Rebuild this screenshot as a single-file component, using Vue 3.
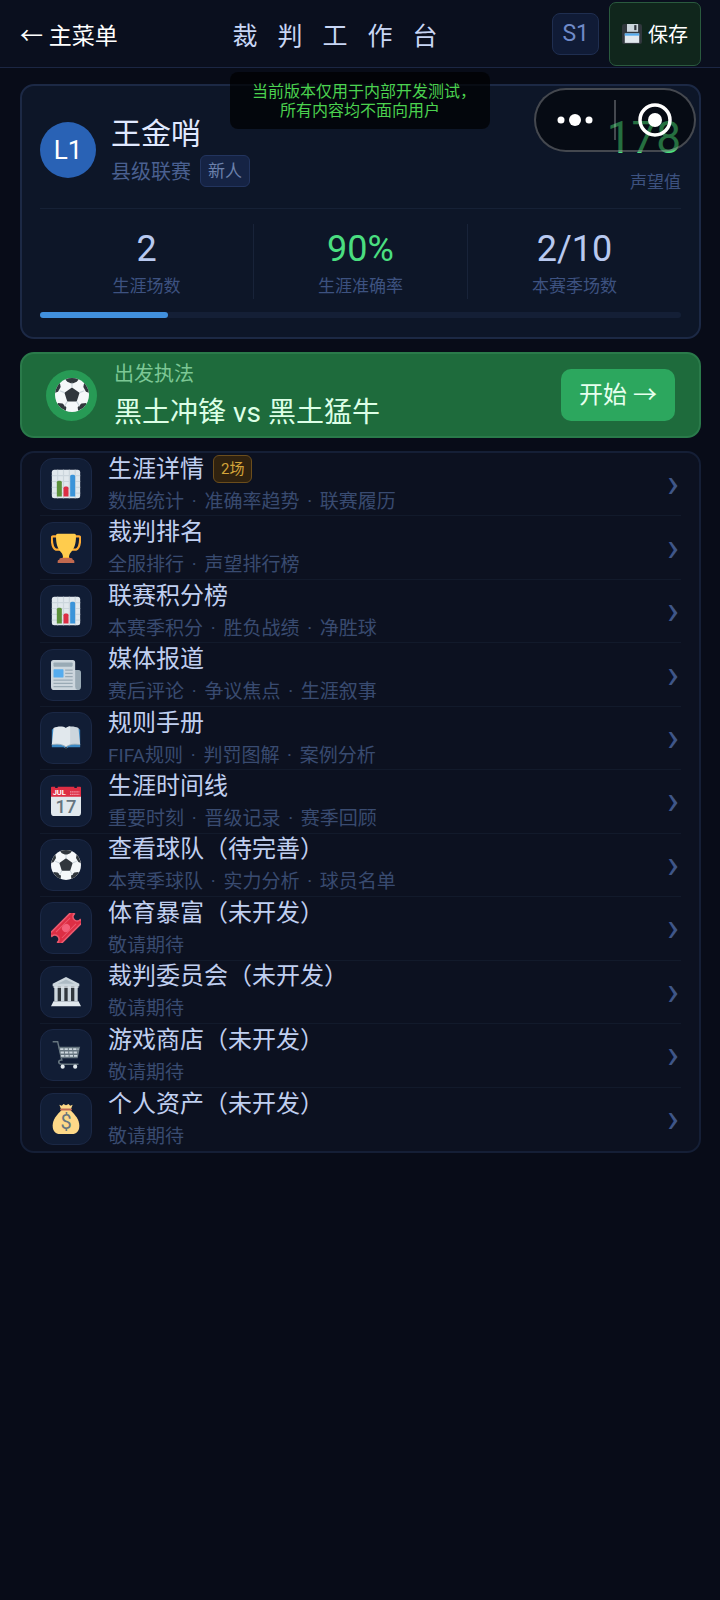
<script setup>
import { ref, computed } from 'vue'

const referee = ref({
  level: 'L1',
  name: '王金哨',
  league: '县级联赛',
  title: '新人',
  reputation: 178,
  seasonPlayed: 2,
  seasonTotal: 10
})

const stats = computed(() => [
  { label: '生涯场数', value: '2' },
  { label: '生涯准确率', value: '90%', good: true },
  { label: '本赛季场数', value: `${referee.value.seasonPlayed}/${referee.value.seasonTotal}` }
])

const progress = computed(() => (referee.value.seasonPlayed / referee.value.seasonTotal) * 100)

const menu = [
  { icon: 'chart', title: '生涯详情', badge: '2场', desc: ['数据统计', '准确率趋势', '联赛履历'] },
  { icon: 'trophy', title: '裁判排名', desc: ['全服排行', '声望排行榜'] },
  { icon: 'chart', title: '联赛积分榜', desc: ['本赛季积分', '胜负战绩', '净胜球'] },
  { icon: 'news', title: '媒体报道', desc: ['赛后评论', '争议焦点', '生涯叙事'] },
  { icon: 'book', title: '规则手册', desc: ['FIFA规则', '判罚图解', '案例分析'] },
  { icon: 'calendar', title: '生涯时间线', desc: ['重要时刻', '晋级记录', '赛季回顾'] },
  { icon: 'ball', title: '查看球队（待完善）', desc: ['本赛季球队', '实力分析', '球员名单'] },
  { icon: 'ticket', title: '体育暴富（未开发）', desc: ['敬请期待'] },
  { icon: 'bank', title: '裁判委员会（未开发）', desc: ['敬请期待'] },
  { icon: 'cart', title: '游戏商店（未开发）', desc: ['敬请期待'] },
  { icon: 'money', title: '个人资产（未开发）', desc: ['敬请期待'] }
]
</script>

<template>
  <div class="page">
    <svg class="sprite" aria-hidden="true">
      <symbol id="icon-chart" viewBox="0 0 36 36">
        <rect x="1" y="1" width="34" height="34" rx="3" fill="#e1e8ed" />
        <path d="M1 8h34M1 15h34M1 22h34M1 29h34M8 1v34M15 1v34M22 1v34M29 1v34" stroke="#ccd6dd" stroke-width="1.4" />
        <path d="M7 33V16a2 2 0 0 1 2-2h2a2 2 0 0 1 2 2v17z" fill="#5c913b" />
        <path d="M15 33V23a2 2 0 0 1 2-2h2a2 2 0 0 1 2 2v10z" fill="#dd2e44" />
        <path d="M23 33V9a2 2 0 0 1 2-2h2a2 2 0 0 1 2 2v24z" fill="#3b94d9" />
      </symbol>
      <symbol id="icon-trophy" viewBox="0 0 36 36">
        <path d="M8 4H3C1 4 .8 5 1 8c.3 6 2 11 5 12h7M28 4h5c2 0 2.200 1 2 4-.3 6-2 11-5 12h-7" fill="none" stroke="#ffac33" stroke-width="2.600" />
        <path d="M8 1h20c1.500 0 2 1 2 3 0 9-2 15-6 19-2 2-2.500 4-2.500 8h-7c0-4-.5-6-2.500-8C8 19 6 13 6 4c0-2 .5-3 2-3z" fill="#ffcc4d" />
        <path d="M14 29h8v3h-8z" fill="#ffac33" />
        <path d="M12 30h12c1.500 0 2 1 2 2 1.500 0 2 1 2 2v2H8v-2c0-1 .5-2 2-2 0-1 .5-2 2-2z" fill="#c1694f" />
      </symbol>
      <symbol id="icon-news" viewBox="0 0 36 36">
        <path d="M28 12h5a3 3 0 0 1 3 3v17a4 4 0 0 1-4 4h-5z" fill="#99aab5" />
        <path d="M3 0h23a3 3 0 0 1 3 3v29a4 4 0 0 0 3 4H4a4 4 0 0 1-4-4V3a3 3 0 0 1 3-3z" fill="#ccd6dd" />
        <rect x="3" y="3" width="23" height="5" rx="1" fill="#99aab5" />
        <rect x="3" y="11" width="12" height="10" rx="1" fill="#55acee" />
        <path d="M17 12h9M17 16h9M17 20h9M3 24h23M3 28h23M3 32h23" stroke="#99aab5" stroke-width="1.500" />
      </symbol>
      <symbol id="icon-book" viewBox="0 0 36 36">
        <path d="M1 8l3-2h28l3 2v21H21l-3 2-3-2H1z" fill="#3b88c3" />
        <path d="M18 29V6C14 3.500 8 4 3 6L1 26c6-1 13-1 17 3z" fill="#e1e8ed" />
        <path d="M18 29V6c4-2.500 10-2 15 0l2 20c-6-1-13-1-17 3z" fill="#ccd6dd" />
        <path d="M18 28V6c1.500-1.200 3-1.700 5-2v22c-2 .4-3.500 1-5 2z" fill="#e1e8ed" />
        <path d="M1 26c6-1 13-1 17 3 4-4 11-4 17-3" fill="none" stroke="#99aab5" />
        <circle cx="18" cy="30" r="1.300" fill="#31373d" />
      </symbol>
      <symbol id="icon-calendar" viewBox="0 0 36 36">
        <path d="M0 10h36v22a4 4 0 0 1-4 4H4a4 4 0 0 1-4-4z" fill="#e1e8ed" />
        <path d="M0 13V2a1 1 0 0 1 1-1h4v1.500h3V1h20v1.500h3V1h4a1 1 0 0 1 1 1v11z" fill="#dd2e44" />
        <path d="M23 7h11M23 10h11" stroke="#f4abba" stroke-width="1.500" stroke-dasharray="1.500 1" />
      </symbol>
      <symbol id="icon-ball" viewBox="0 0 36 36">
        <circle cx="18" cy="18" r="18" fill="#f5f8fa" />
        <path d="M18 10l8 5.500-3 9.500H13l-3-9.500z" fill="#31373d" />
        <path d="M11 1.500A18 18 0 0 1 25 1.500L23 4l-5 2-5-2zM35.800 15.500l-3-1L30 9.500l.8-4.200a18 18 0 0 1 5 10.200zM33 28a18 18 0 0 1-8.500 6.800L24 31l4-4 5-.5zM3 28a18 18 0 0 0 8.500 6.800L12 31l-4-4-5-.5zM.2 15.500l3-1L6 9.500l-.8-4.200a18 18 0 0 0-5 10.200z" fill="#31373d" />
        <path d="M18 10V5M26 15.500l5-2M23 25l3 5M13 25l-3 5M10 15.500l-5-2" stroke="#ccd6dd" stroke-width="1.200" />
      </symbol>
      <symbol id="icon-ticket" viewBox="0 0 36 36">
        <g transform="rotate(-45 18 18)">
          <path d="M-1 9h38v4a5 5 0 0 0 0 10v4H-1v-4a5 5 0 0 0 0-10z" fill="#dd2e44" stroke="#ea596e" stroke-width="2" />
          <path d="M6 13h24M6 23h24" stroke="#ea596e" stroke-width="1.200" />
          <ellipse cx="18" cy="18" rx="5" ry="4.500" fill="#f4607a" />
        </g>
      </symbol>
      <symbol id="icon-bank" viewBox="0 0 36 36">
        <path d="M18 0l16 8v3H2V8z" fill="#ccd6dd" />
        <path d="M18 3l10 5H8z" fill="#aebbc4" />
        <path d="M4 11h28v18H4z" fill="#31373d" />
        <path d="M4 11h4v18H4zM12 11h4v18h-4zM20 11h4v18h-4zM28 11h4v18h-4z" fill="#ccd6dd" />
        <path d="M3 11h30v2H3zM3 29h30l3 6H0z" fill="#e1e8ed" />
      </symbol>
      <symbol id="icon-cart" viewBox="0 0 36 36">
        <path d="M2 2h6l5 22c-5 0-5 5 0 5h20" fill="none" stroke="#66757f" stroke-width="1.800" />
        <path d="M9 8h26l-3 14H12z" fill="#66757f" />
        <path d="M11 11h22M11.500 15h21M12 19h20" stroke="#ccd6dd" stroke-width="2.200" stroke-dasharray="4 1.200" />
        <circle cx="14" cy="32" r="2.500" fill="#e1e8ed" />
        <circle cx="29" cy="32" r="2.500" fill="#e1e8ed" />
      </symbol>
      <symbol id="icon-money" viewBox="0 0 36 36">
        <path d="M13 7C7 13 2 19 2 26c0 6 3 10 9 10h14c6 0 9-4 9-10 0-7-5-13-11-19z" fill="#fdd888" />
        <path d="M12 6L10 1l3 1 2-2 3 1.500L21 0l2 2 3-1-2 5z" fill="#fdd888" />
        <path d="M12 6.500h12" stroke="#bf6952" stroke-width="2.400" stroke-linecap="round" />
      </symbol>
      <symbol id="icon-save" viewBox="0 0 36 36">
        <path d="M4 0h28a4 4 0 0 1 4 4v28a4 4 0 0 1-4 4H4a4 4 0 0 1-4-4V4a4 4 0 0 1 4-4z" fill="#31373d" />
        <path d="M9 0h20v14H9z" fill="#ccd6dd" />
        <path d="M22 2h4v9h-4z" fill="#31373d" />
        <path d="M5 17h26v17H5z" fill="#e1e8ed" />
        <path d="M5 17h26v4H5z" fill="#55acee" />
      </symbol>
    </svg>

    <header class="navbar">
      <button class="back-btn">← 主菜单</button>
      <h1 class="nav-title">裁判工作台</h1>
      <div class="nav-actions">
        <span class="season">S1</span>
        <button class="save-btn">
          <svg class="save-icon" aria-hidden="true"><use href="#icon-save" /></svg>
          保存
        </button>
      </div>
    </header>

    <main class="content">
      <section class="profile">
        <div class="profile-top">
          <div class="avatar">{{ referee.level }}</div>
          <div class="identity">
            <h2 class="name">{{ referee.name }}</h2>
            <div class="rank">
              <span>{{ referee.league }}</span>
              <span class="rank-tag">{{ referee.title }}</span>
            </div>
          </div>
          <div class="reputation">
            <div class="reputation-value">{{ referee.reputation }}</div>
            <div class="reputation-label">声望值</div>
          </div>
        </div>
        <div class="stats">
          <div v-for="stat in stats" :key="stat.label" class="stat">
            <div class="stat-value" :class="{ good: stat.good }">{{ stat.value }}</div>
            <div class="stat-label">{{ stat.label }}</div>
          </div>
        </div>
        <div class="progress">
          <div class="progress-fill" :style="{ width: progress + '%' }"></div>
        </div>
      </section>

      <section class="match">
        <div class="match-icon">
          <svg class="ball" aria-hidden="true"><use href="#icon-ball" /></svg>
        </div>
        <div class="match-info">
          <div class="match-label">出发执法</div>
          <div class="match-teams">黑土冲锋 vs 黑土猛牛</div>
        </div>
        <button class="start-btn">开始 →</button>
      </section>

      <nav class="menu">
        <a v-for="item in menu" :key="item.title" href="#" class="menu-item" @click.prevent>
          <span class="menu-icon">
            <svg class="glyph" viewBox="0 0 36 36" aria-hidden="true">
              <use :href="'#icon-' + item.icon" />
              <template v-if="item.icon === 'calendar'">
                <text x="2" y="11" class="cal-month">JUL</text>
                <text x="18" y="32" text-anchor="middle" class="cal-day">17</text>
              </template>
              <text v-if="item.icon === 'money'" x="18" y="30" text-anchor="middle" class="dollar">$</text>
            </svg>
          </span>
          <span class="menu-text">
            <span class="menu-title">
              {{ item.title }}
              <span v-if="item.badge" class="menu-badge">{{ item.badge }}</span>
            </span>
            <span class="menu-desc">
              <template v-for="(part, i) in item.desc" :key="part"><span v-if="i" class="dot"> · </span>{{ part }}</template>
            </span>
          </span>
          <span class="arrow">›</span>
        </a>
      </nav>
    </main>

    <div class="notice">当前版本仅用于内部开发测试，<br>所有内容均不面向用户</div>

    <div class="capsule">
      <button class="capsule-btn" aria-label="更多">
        <svg class="more" viewBox="0 0 36 14">
          <circle cx="4" cy="7" r="3.500" />
          <circle cx="18" cy="7" r="6" />
          <circle cx="32" cy="7" r="3.500" />
        </svg>
      </button>
      <button class="capsule-btn" aria-label="关闭">
        <svg class="target" viewBox="0 0 34 34">
          <circle cx="17" cy="17" r="15" fill="none" stroke="#fff" stroke-width="3.500" />
          <circle cx="17" cy="17" r="7" />
        </svg>
      </button>
    </div>
  </div>
</template>

<style>
body {
  background: #080c18;
}
</style>

<style scoped>
.page {
  position: relative;
  min-height: 100vh;
  background: #080c18;
  color: #c8d6f5;
  font-family: Roboto, "Noto Sans CJK SC", sans-serif;
  font-weight: 400;
}

.sprite {
  position: absolute;
  width: 0;
  height: 0;
}

.cal-month {
  font-size: 9px;
  font-weight: 700;
  fill: #fff;
}

.cal-day {
  font-size: 22px;
  font-weight: 500;
  fill: #66757f;
}

.dollar {
  font-size: 24px;
  fill: #67757f;
}

button {
  padding: 0;
  border: none;
  background: none;
  color: inherit;
  font: inherit;
  cursor: pointer;
}

.navbar {
  display: flex;
  align-items: center;
  height: 67px;
  padding: 0 19px 0 20px;
  background: #0a0f1e;
  border-bottom: 1px solid #1b2643;
}

.back-btn {
  padding-right: 20px;
  color: #fff;
  font-size: 23px;
}

.nav-title {
  flex: 1;
  margin: 0;
  font-size: 25px;
  font-weight: 400;
  letter-spacing: 20px;
  text-align: center;
  white-space: nowrap;
}

.nav-actions {
  display: flex;
  align-items: center;
  gap: 10px;
}

.season {
  padding: 0 9px;
  border: 1px solid #1f2e50;
  border-radius: 8px;
  background: #101b36;
  color: #6f8ac8;
  font-size: 23px;
  line-height: 40px;
}

.save-btn {
  display: flex;
  align-items: center;
  gap: 6px;
  height: 64px;
  padding: 0 12px;
  border: 1px solid #2a5a3e;
  border-radius: 7px;
  background: #10261c;
  color: #fff;
  font-size: 20px;
}

.save-icon {
  width: 20px;
  height: 20px;
}

.content {
  display: flex;
  flex-direction: column;
  gap: 13px;
  padding: 16px 19px 0 20px;
}

.profile {
  padding: 18px 18px 19px;
  border: 2px solid #1c2945;
  border-radius: 14px;
  background: #0d1628;
}

.profile-top {
  display: flex;
  align-items: center;
  height: 91px;
  padding-bottom: 13px;
  border-bottom: 1px solid #162136;
}

.avatar {
  width: 56px;
  margin-right: 15px;
  border-radius: 50%;
  background: #2962b5;
  color: #fff;
  font-size: 26px;
  line-height: 56px;
  text-align: center;
}

.identity {
  flex: 1;
}

.name {
  margin: 0;
  color: #e0e9ff;
  font-size: 30px;
  font-weight: 400;
  line-height: 42px;
}

.rank {
  display: flex;
  align-items: center;
  gap: 9px;
  color: #4a6090;
  font-size: 20px;
}

.rank-tag {
  padding: 0 7px;
  border: 1px solid #22345e;
  border-radius: 6px;
  background: #152344;
  color: #6b80ab;
  font-size: 17px;
  line-height: 30px;
}

.reputation {
  padding-top: 9px;
  text-align: right;
}

.reputation-value {
  color: #4ade80;
  font-size: 44px;
  line-height: 56px;
}

.reputation-label {
  color: #3d5280;
  font-size: 17px;
  line-height: 32px;
}

.stats {
  display: flex;
  padding: 15px 0 13px;
}

.stat {
  flex: 1;
  text-align: center;
}

.stat + .stat {
  border-left: 1px solid #182339;
}

.stat-value {
  color: #b8c9f0;
  font-size: 36px;
  line-height: 50px;
}

.stat-value.good {
  color: #4ade80;
}

.stat-label {
  color: #3d5280;
  font-size: 17px;
  line-height: 25px;
}

.progress {
  height: 6px;
  border-radius: 3px;
  background: #141f36;
}

.progress-fill {
  height: 100%;
  border-radius: 3px;
  background: #4190de;
}

.match {
  display: flex;
  align-items: center;
  padding: 0 24px;
  border: 2px solid #2a7a4a;
  border-radius: 14px;
  background: #1e6b3c;
}

.match-icon {
  display: flex;
  align-items: center;
  justify-content: center;
  width: 51px;
  height: 51px;
  margin-right: 17px;
  border-radius: 50%;
  background: #279a55;
}

.ball {
  width: 34px;
  height: 34px;
}

.match-info {
  flex: 1;
  padding: 1px 0 3px;
}

.match-label {
  color: #7cc795;
  font-size: 20px;
  line-height: 38px;
}

.match-teams {
  color: #dcffe6;
  font-size: 28px;
  line-height: 40px;
}

.start-btn {
  padding: 0 18px;
  border-radius: 10px;
  background: #2ca75e;
  color: #e6ffee;
  font-size: 24px;
  line-height: 52px;
}

.menu {
  display: grid;
  grid-auto-rows: 1fr;
  box-sizing: border-box;
  min-height: 702px;
  border: 2px solid #151f36;
  border-radius: 14px;
  background: #0c1120;
}

.menu-item {
  display: flex;
  align-items: center;
  margin: 0 18px;
  border-bottom: 1px solid #121a2b;
  color: inherit;
  text-decoration: none;
}

.menu-item:last-child {
  border-bottom: none;
}

.menu-icon {
  display: flex;
  align-items: center;
  justify-content: center;
  box-sizing: border-box;
  width: 52px;
  height: 52px;
  margin-right: 16px;
  border: 1px solid #1b2845;
  border-radius: 13px;
  background: #111d35;
}

.glyph {
  width: 30px;
  height: 30px;
}

.menu-text {
  display: flex;
  flex: 1;
  flex-direction: column;
  justify-content: center;
  height: 60px;
}

.menu-title {
  display: flex;
  align-items: center;
  gap: 9px;
  color: #c0cff0;
  font-size: 24px;
  line-height: 35px;
}

.menu-badge {
  padding: 0 7px;
  border: 1px solid #6b4d1c;
  border-radius: 6px;
  background: #30220f;
  color: #d3a43a;
  font-size: 15px;
  line-height: 26px;
}

.menu-desc {
  color: #394b70;
  font-size: 19px;
  line-height: 30px;
}

.dot {
  padding: 0 3px;
  white-space: pre;
}

.arrow {
  margin-right: 2px;
  color: #3f5688;
  font-size: 40px;
  line-height: 40px;
}

.notice {
  position: absolute;
  top: 72px;
  left: 50%;
  box-sizing: border-box;
  width: 260px;
  padding: 10px 0 9px;
  border-radius: 8px;
  background: rgba(0, 0, 0, 0.7);
  color: #4bd24f;
  font-size: 16px;
  font-feature-settings: "halt";
  line-height: 19px;
  text-align: center;
  transform: translateX(-50%);
}

.capsule {
  position: absolute;
  top: 88px;
  right: 24px;
  display: flex;
  align-items: center;
  box-sizing: border-box;
  width: 162px;
  height: 64px;
  border: 2px solid rgba(255, 255, 255, 0.25);
  border-radius: 32px;
  background: rgba(0, 0, 0, 0.5);
}

.capsule-btn {
  display: flex;
  flex: 1;
  align-items: center;
  justify-content: center;
  height: 40px;
}

.capsule-btn + .capsule-btn {
  border-left: 2px solid rgba(255, 255, 255, 0.25);
}

.more {
  width: 36px;
  height: 14px;
  fill: #fff;
}

.target {
  width: 34px;
  height: 34px;
  fill: #fff;
}
</style>
